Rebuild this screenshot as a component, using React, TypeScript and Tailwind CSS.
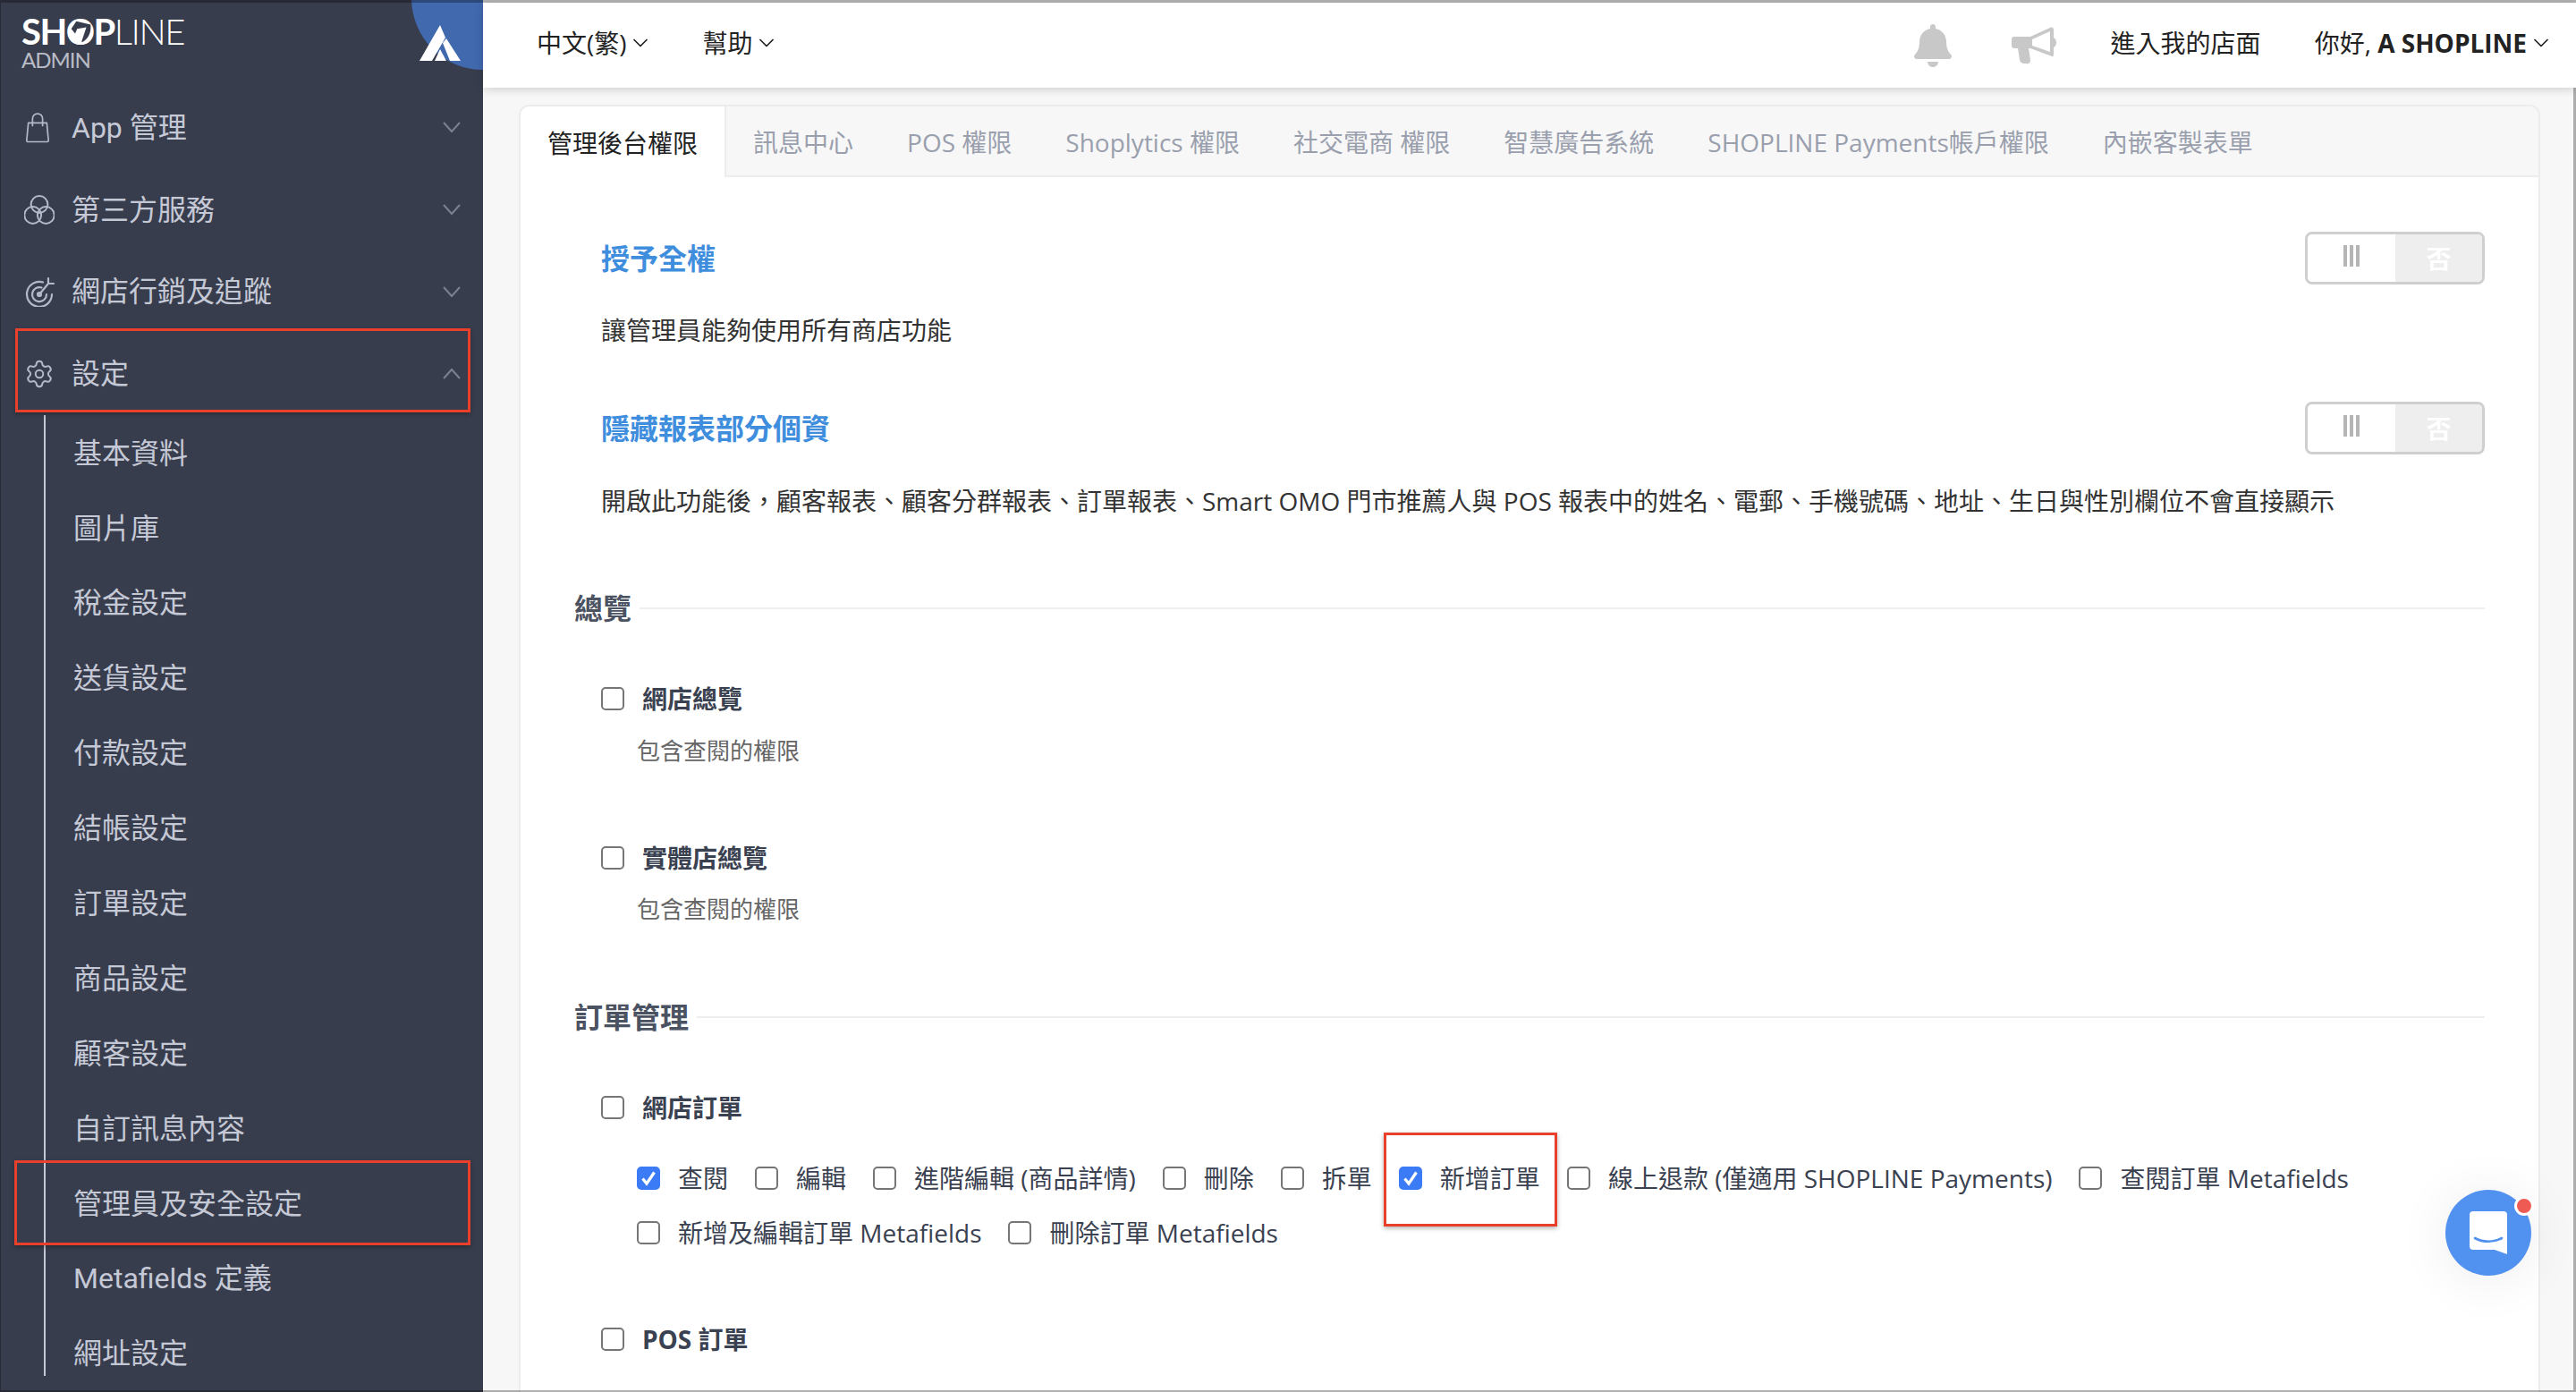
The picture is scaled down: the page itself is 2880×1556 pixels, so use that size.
import { ChevronDown, Settings } from "lucide-react";
import { FaBell } from "react-icons/fa";

const navItems = [
  { label: "App 管理", icon: <BagIcon /> },
  { label: "第三方服務", icon: <CirclesIcon /> },
  { label: "網店行銷及追蹤", icon: <TargetIcon /> },
];

const subItems = [
  "基本資料",
  "圖片庫",
  "稅金設定",
  "送貨設定",
  "付款設定",
  "結帳設定",
  "訂單設定",
  "商品設定",
  "顧客設定",
  "自訂訊息內容",
  "管理員及安全設定",
  "Metafields 定義",
  "網址設定",
];

const tabs = [
  "訊息中心",
  "POS 權限",
  "Shoplytics 權限",
  "社交電商 權限",
  "智慧廣告系統",
  "SHOPLINE Payments帳戶權限",
  "內嵌客製表單",
];

const orderPerms = [
  { label: "查閱", checked: true },
  { label: "編輯" },
  { label: "進階編輯 (商品詳情)" },
  { label: "刪除" },
  { label: "拆單" },
  { label: "新增訂單", checked: true },
  { label: "線上退款 (僅適用 SHOPLINE Payments)" },
  { label: "查閱訂單 Metafields" },
  { label: "新增及編輯訂單 Metafields" },
  { label: "刪除訂單 Metafields" },
];

function BagIcon() {
  return (
    <svg viewBox="0 0 32 36" className="w-[30px] h-[34px]" fill="none" stroke="#b4b9c8" strokeWidth="1.8">
      <path d="M5 12h22l2 21a1.5 1.5 0 0 1-1.5 1.5h-23A1.5 1.5 0 0 1 3 33z" strokeLinejoin="round" />
      <path d="M10 16V7a6 6 0 0 1 12 0v9" />
    </svg>
  );
}

function CirclesIcon() {
  return (
    <svg viewBox="0 0 34 34" className="w-[34px] h-[34px]" fill="none" stroke="#b4b9c8" strokeWidth="2">
      <circle cx="17" cy="10.5" r="9.4" />
      <circle cx="9.7" cy="22.5" r="9.4" />
      <circle cx="24.3" cy="22.5" r="9.4" />
    </svg>
  );
}

function TargetIcon() {
  return (
    <svg viewBox="0 0 34 34" className="w-[34px] h-[34px]" fill="none" stroke="#b4b9c8" strokeWidth="2.2" strokeLinecap="round">
      <path d="M21 6.5A14 14 0 1 0 31 20" />
      <path d="M19.5 12.5A8 8 0 1 0 25 20" />
      <circle cx="17" cy="20" r="2" />
      <path d="M17 20 27 8M27 8V2M27 8h6" />
    </svg>
  );
}

function MenuChevron({ up }: { up?: boolean }) {
  return (
    <svg viewBox="0 0 20 13" className="w-[20px] h-[13px]" fill="none" stroke="#7d8292" strokeWidth="2">
      <path d={up ? "M1 12 10 2l9 10" : "M1 1l9 10 9-10"} />
    </svg>
  );
}

function MegaphoneIcon() {
  return (
    <svg viewBox="0 0 52 43" className="w-[52px] h-[43px]" fill="#c8c8c8">
      <path d="M4 12H22L45 1.5Q48 1 48 4V13Q51 15 51 18.5Q51 22 48 24V32Q48 35 45 33.5L22 25H20L22 38Q22 43 17 42H15Q11 42 10 38L8 25H4Q1 25 1 22V15Q1 12 4 12z" />
      <path d="M24 15 44 6V29L24 22z" fill="#fff" />
    </svg>
  );
}

function MountainLogo() {
  return (
    <svg viewBox="0 0 46 40" className="w-[46px] h-[40px]" fill="#fff">
      <path d="M23 0 0 40H14L29 14z" />
      <path d="M26 20 30 15 46 40H34z" />
      <path d="M17 40 23 27 30 40z" />
    </svg>
  );
}

function Logo() {
  return (
    <div className="font-['Lato','Noto_Sans',sans-serif] text-white">
      <div className="flex items-center text-[40px] h-[30px] leading-[30px] tracking-[-1.5px]">
        <span className="font-bold">SH</span>
        <span className="relative font-bold">
          O
          <svg viewBox="0 0 32 32" className="absolute left-[1px] top-[1px] w-[30px] h-[30px]">
            <circle cx="16" cy="16" r="15" fill="#fff" />
            <path d="M11 3 28 7c1 8-2 17-10 21L5 12z" fill="#383d4d" />
            <path d="M12 12 7 24c3 3 6 4 10 4l6-18z" fill="#fff" />
          </svg>
        </span>
        <span className="font-bold">P</span>
        <span className="font-light">LINE</span>
      </div>
      <div className="mt-[8px] text-[24px] h-[17px] leading-[17px] text-[#b9bcc6] tracking-[-1px]">ADMIN</div>
    </div>
  );
}

function Sidebar() {
  return (
    <aside className="relative w-[540px] shrink-0 overflow-hidden bg-[#383d4d] font-['Roboto','Noto_Sans_CJK_TC',sans-serif] text-[#c5c9d6]">
      {/* Blue quarter circle, cut off by the aside */}
      <div className="absolute left-[460px] top-[-82px] w-[160px] h-[160px] rounded-full bg-[#4169ae]" />
      <div className="absolute left-[469px] top-[28px]">
        <MountainLogo />
      </div>

      <div className="h-[97px] pl-[24px] pt-[20px]">
        <Logo />
      </div>

      <nav className="text-[32px]">
        {navItems.map((item) => (
          <div key={item.label} className="flex items-center h-[91.7px] pr-[25px]">
            <span className="w-[80px] pl-[27px] flex">{item.icon}</span>
            <span className="flex-1">{item.label}</span>
            <MenuChevron />
          </div>
        ))}
        <div className="flex items-center h-[91.7px] pr-[25px]">
          <span className="w-[80px] pl-[27px] flex">
            <Settings className="w-[34px] h-[34px] text-[#b4b9c8]" strokeWidth={1.4} />
          </span>
          <span className="flex-1">設定</span>
          <MenuChevron up />
        </div>

        <div className="ml-[49px] h-[1074px] pt-[1px] border-l-2 border-[#c5c9d6] pl-[31px]">
          {subItems.map((item) => (
            <div key={item} className="flex items-center h-[83.9px] whitespace-nowrap">
              {item}
            </div>
          ))}
        </div>
      </nav>
    </aside>
  );
}

function Header() {
  return (
    <header className="relative z-10 h-[95px] shrink-0 bg-white shadow-[0_2px_10px_rgba(0,0,0,0.16)] flex items-center pl-[60px] pr-[25px] text-[28px] text-[#222]">
      <div className="flex items-center pb-[5px]">
        中文(繁)
        <ChevronDown className="w-[28px] h-[28px] ml-[1px]" strokeWidth={1.5} />
      </div>
      <div className="flex items-center pb-[5px] ml-[56px]">
        幫助
        <ChevronDown className="w-[28px] h-[28px] ml-[1px]" strokeWidth={1.5} />
      </div>
      <div className="ml-auto flex items-center">
        <FaBell className="w-[46px] h-[48px] text-[#c8c8c8]" />
        <span className="ml-[64px]">
          <MegaphoneIcon />
        </span>
        <span className="ml-[60px] pb-[5px]">進入我的店面</span>
        <span className="ml-[60px] pb-[5px] whitespace-nowrap">
          你好, <b>A SHOPLINE</b>
        </span>
        <span className="pb-[5px] ml-[2px]">
          <ChevronDown className="w-[28px] h-[28px]" strokeWidth={1.5} />
        </span>
      </div>
    </header>
  );
}

function Toggle() {
  return (
    <div className="ml-auto flex w-[201px] h-[59px] rounded-[8px] border-[3px] border-[#cfcfcf] overflow-hidden">
      <div className="flex-1 flex items-center justify-center gap-[3px] pb-[6px] bg-white">
        <span className="w-[4px] h-[24px] bg-[#b5b5b5]" />
        <span className="w-[4px] h-[24px] bg-[#b5b5b5]" />
        <span className="w-[4px] h-[24px] bg-[#b5b5b5]" />
      </div>
      <div className="w-[97px] flex items-center justify-center bg-[#eeeeee] text-white font-bold text-[28px]">否</div>
    </div>
  );
}

function Checkbox({ checked }: { checked?: boolean }) {
  if (checked) {
    return (
      <span className="flex items-center justify-center w-[26px] h-[26px] shrink-0 rounded-[5px] bg-[#3b7bf6]">
        <svg viewBox="0 0 26 26" className="w-[26px] h-[26px]" fill="none" stroke="#fff" strokeWidth="3.2">
          <path d="M6.5 13.5 11 19 19.5 6.5" />
        </svg>
      </span>
    );
  }
  return <span className="block w-[26px] h-[26px] shrink-0 rounded-[5px] border-2 border-[#767676] bg-white" />;
}

function SectionTitle({ title }: { title: string }) {
  return (
    <div className="flex items-center h-[40px] ml-[60px] mr-[60px] gap-[9px]">
      <span className="text-[32px] font-bold text-[#4b5261] whitespace-nowrap">{title}</span>
      <span className="flex-1 h-[2px] bg-[#eeeeee]" />
    </div>
  );
}

function BoldCheck({ label, className }: { label: string; className: string }) {
  return (
    <div className={`flex items-center h-[40px] ml-[90px] ${className}`}>
      <Checkbox />
      <span className="ml-[20px] font-bold text-[#3a4150]">{label}</span>
    </div>
  );
}

function Panel() {
  return (
    <div className="flex-1 min-h-0 bg-[#f7f7f7] pl-[40px] pr-[40px] pt-[19px] overflow-hidden">
      <div className="h-full rounded-t-[12px] border-x-2 border-t-2 border-[#ececec] text-[28px] overflow-hidden bg-white">
        <div className="flex h-[79px] bg-[#f7f7f8] border-b-2 border-[#ececec]">
          <div className="flex items-center px-[30px] pt-[2px] bg-white border-r-2 border-[#ececec] text-[#222] -mb-[2px]">管理後台權限</div>
          <div className="flex items-center gap-[60px] pl-[30px] pt-[2px] text-[#9a9fad]">
            {tabs.map((tab) => (
              <span key={tab} className="whitespace-nowrap">
                {tab}
              </span>
            ))}
          </div>
        </div>

        <div className="flex items-center mt-[61px] ml-[90px] mr-[60px]">
          <span className="text-[32px] font-bold text-[#3f8ede]">授予全權</span>
          <Toggle />
        </div>
        <p className="mt-[31px] ml-[90px] h-[40px] leading-[40px] text-[#333]">讓管理員能夠使用所有商店功能</p>

        <div className="flex items-center mt-[60px] ml-[90px] mr-[60px]">
          <span className="text-[32px] font-bold text-[#3f8ede]">隱藏報表部分個資</span>
          <Toggle />
        </div>
        <p className="mt-[32px] ml-[90px] h-[40px] leading-[40px] text-[#333] whitespace-nowrap">
          開啟此功能後，顧客報表、顧客分群報表、訂單報表、Smart OMO 門市推薦人與 POS 報表中的姓名、電郵、手機號碼、地址、生日與性別欄位不會直接顯示
        </p>

        <div className="mt-[80px]">
          <SectionTitle title="總覽" />
        </div>
        <BoldCheck label="網店總覽" className="mt-[61px]" />
        <p className="mt-[18px] ml-[130px] h-[40px] leading-[40px] text-[26px] text-[#666]">包含查閱的權限</p>
        <BoldCheck label="實體店總覽" className="mt-[80px]" />
        <p className="mt-[17px] ml-[130px] h-[40px] leading-[40px] text-[26px] text-[#666]">包含查閱的權限</p>

        <div className="mt-[81px]">
          <SectionTitle title="訂單管理" />
        </div>
        <BoldCheck label="網店訂單" className="mt-[61px]" />
        <div className="mt-[39px] ml-[130px] w-[2000px] flex flex-wrap gap-x-[30px] gap-y-[21px] text-[#3a4150]">
          {orderPerms.map((perm) => (
            <div key={perm.label} className="flex items-center h-[40px] gap-[20px] whitespace-nowrap">
              <Checkbox checked={perm.checked} />
              {perm.label}
            </div>
          ))}
        </div>
        <BoldCheck label="POS 訂單" className="mt-[79px]" />
      </div>
    </div>
  );
}

function ChatWidget() {
  return (
    <div className="absolute left-[2734px] top-[1330px] w-[96px] h-[96px] rounded-full bg-[#5191f0] flex items-center justify-center shadow-[0_4px_60px_rgba(0,0,0,0.08)]">
      <svg viewBox="0 0 42 48" className="w-[42px] h-[48px]">
        <path d="M4 0h34a4 4 0 0 1 4 4v44l-14-5H4a4 4 0 0 1-4-4V4a4 4 0 0 1 4-4z" fill="#fff" />
        <path d="M6 30c9 5 21 5 30 0" fill="none" stroke="#5191f0" strokeWidth="2.6" strokeLinecap="round" />
      </svg>
      <span className="absolute left-[77px] top-[7px] w-[22px] h-[22px] rounded-full bg-[#ee5b52] border-[3px] border-white" />
    </div>
  );
}

export default function App() {
  return (
    <div className="relative w-[2880px] h-[1556px] overflow-hidden flex font-['Open_Sans','Noto_Sans_CJK_TC',sans-serif] bg-white">
      <Sidebar />
      <main className="flex-1 min-w-0 flex flex-col pt-[3px]">
        <Header />
        <Panel />
      </main>

      <ChatWidget />

      {/* Red annotation boxes */}
      <div className="absolute left-[17px] top-[367px] w-[509px] h-[94px] border-[3px] border-[#e8402a] shadow-[0_2px_5px_rgba(0,0,0,0.3)]" />
      <div className="absolute left-[16px] top-[1297px] w-[510px] h-[95px] border-[3px] border-[#e8402a] shadow-[0_2px_5px_rgba(0,0,0,0.3)]" />
      <div className="absolute left-[1547px] top-[1266px] w-[194px] h-[105px] border-[3px] border-[#e8402a] shadow-[0_2px_5px_rgba(0,0,0,0.3)]" />

      {/* Thin dark window edge around the whole shot */}
      <div className="absolute inset-0 border-t-[3px] border-r-[3px] border-b-2 border-l border-black/30 pointer-events-none" />
    </div>
  );
}
